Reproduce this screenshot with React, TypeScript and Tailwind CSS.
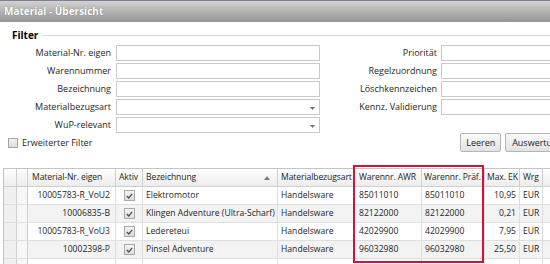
import React from "react";

const font = { fontFamily: '"Open Sans", "Liberation Sans", sans-serif' };

const leftFields = [
  { label: "Material-Nr. eigen", select: false },
  { label: "Warennummer", select: false },
  { label: "Bezeichnung", select: false },
  { label: "Materialbezugsart", select: true },
  { label: "WuP-relevant", select: true },
];

const rightFields = ["Priorität", "Regelzuordnung", "Löschkennzeichen", "Kennz. Validierung"];

const rows = [
  { nr: "10005783-R_VoU2", bez: "Elektromotor", art: "Handelsware", awr: "85011010", praef: "85011010", ek: "10,95", wrg: "EUR" },
  { nr: "10006835-B", bez: "Klingen Adventure (Ultra-Scharf)", art: "Handelsware", awr: "82122000", praef: "82122000", ek: "0,21", wrg: "EUR" },
  { nr: "10005783-R_VoU3", bez: "Ledereteui", art: "Handelsware", awr: "42029900", praef: "42029900", ek: "7,95", wrg: "EUR" },
  { nr: "10002398-P", bez: "Pinsel Adventure", art: "Handelsware", awr: "96032980", praef: "96032980", ek: "25,50", wrg: "EUR" },
];

const cols = "grid grid-cols-[13px_11px_88px_27px_135px_77px_67px_63px_35px_23px_60px]";
const cell = "flex items-center overflow-hidden whitespace-nowrap border-r";

function Caret() {
  return (
    <svg width="5" height="3" viewBox="0 0 5 3" className="absolute right-[4px] top-[7px]">
      <path d="M0 0 H5 L2.5 3 Z" fill="#707070" />
    </svg>
  );
}

function Input({ select }: { select?: boolean }) {
  return (
    <div className="relative h-[16px] border border-[#c9c9c9] bg-white">
      {select && <Caret />}
    </div>
  );
}

function Check() {
  return (
    <div className="flex h-[11px] w-[11px] items-center justify-center border border-[#a9a9a9] bg-gradient-to-b from-[#f4f4f4] to-[#dedede]">
      <svg width="7" height="6" viewBox="0 0 7 6">
        <path d="M0.8 3 L2.8 5 L6.2 0.8" fill="none" stroke="#4a4a4a" strokeWidth="1.2" />
      </svg>
    </div>
  );
}

export default function App() {
  return (
    <div className="relative h-[264px] w-[550px] overflow-hidden bg-white text-[9px] text-[#1e1e1e]" style={font}>
      {/* Titel */}
      <div className="flex h-[22px] items-center border-t border-[#7d7d95] bg-gradient-to-b from-[#d2d2d2] to-[#959595] pl-[4px]">
        <span className="text-[10px] font-bold text-white [text-shadow:0_0_1px_#666]">Material - Übersicht</span>
      </div>

      {/* Filter */}
      <div className="flex items-center gap-[4px] pl-[12px] pt-[6px]">
        <span className="text-[10px] font-bold text-black">Filter</span>
        <div className="h-px flex-1 bg-[#d3d9e3]" />
      </div>

      <div className="flex w-[620px] items-start pt-[2px]">
        <div className="grid w-[320px] grid-cols-[111px_204px] content-start gap-x-[5px] gap-y-[2px]">
          {leftFields.map((f) => (
            <React.Fragment key={f.label}>
              <div className="flex h-[16px] items-center justify-end whitespace-nowrap">{f.label}</div>
              <Input select={f.select} />
            </React.Fragment>
          ))}
        </div>
        <div className="grid grid-cols-[117px_200px] content-start gap-x-[4px] gap-y-[2px]">
          {rightFields.map((f) => (
            <React.Fragment key={f}>
              <div className="flex h-[16px] items-center justify-end whitespace-nowrap">{f}</div>
              <Input />
            </React.Fragment>
          ))}
        </div>
      </div>

      <div className="flex w-[620px] items-center pl-[8px]">
        <div className="h-[10px] w-[10px] border border-[#a4a4a4] bg-gradient-to-b from-[#f2f2f2] to-[#dcdcdc]" />
        <span className="ml-[4px] whitespace-nowrap">Erweiterter Filter</span>
        <div className="ml-[368px] flex gap-[4px]">
          <div className="flex h-[19px] w-[41px] items-center justify-center rounded-[2px] border border-[#b5b5b5] bg-gradient-to-b from-[#fafafa] to-[#e2e2e2]">Leeren</div>
          <div className="flex h-[19px] w-[64px] items-center justify-center whitespace-nowrap rounded-[2px] border border-[#b5b5b5] bg-gradient-to-b from-[#fafafa] to-[#e2e2e2]">Auswertung</div>
        </div>
      </div>

      {/* Tabelle */}
      <div className="ml-[3px] mt-[16px] w-[620px] border-l border-t border-[#c4c4c4] text-[8.6px]">
        <div className={`${cols} h-[18px] border-b border-[#cfcfcf] bg-gradient-to-b from-[#ffffff] to-[#ececec] tracking-[-0.1px]`}>
          <div className="border-r border-[#cfcfcf]" />
          <div className="border-r border-[#cfcfcf]" />
          <div className={`${cell} border-[#cfcfcf] pl-[4px]`}>Material-Nr. eigen</div>
          <div className={`${cell} border-[#cfcfcf] pl-[3px]`}>Aktiv</div>
          <div className={`${cell} justify-between border-[#cfcfcf] pl-[3px] pr-[7px]`}>
            <span>Bezeichnung</span>
            <svg width="6" height="4" viewBox="0 0 6 4">
              <path d="M0 4 L3 0 L6 4 Z" fill="#7b7b7b" />
            </svg>
          </div>
          <div className={`${cell} border-[#cfcfcf] pl-[3px]`}>Materialbezugsart</div>
          <div className={`${cell} border-[#cfcfcf] pl-[4px]`}>Warennr. AWR</div>
          <div className={`${cell} border-[#cfcfcf] pl-[2px]`}>Warennr. Präf.</div>
          <div className={`${cell} border-[#cfcfcf] pl-[2px]`}>Max. EK</div>
          <div className={`${cell} border-[#cfcfcf] pl-[3px]`}>Wrg</div>
          <div />
        </div>
        {rows.map((r, i) => (
          <div key={r.nr} className={`${cols} h-[18px] border-b border-[#dedede] ${i % 2 ? "bg-[#f3f3f3]" : "bg-white"}`}>
            <div className="border-r border-[#cfcfcf] bg-[#f0f0f0]" />
            <div className="border-r border-[#cfcfcf] bg-[#f7f7f7]" />
            <div className={`${cell} justify-end border-[#dedede] pr-[5px]`}>{r.nr}</div>
            <div className={`${cell} justify-center border-[#dedede]`}>
              <Check />
            </div>
            <div className={`${cell} border-[#dedede] pl-[3px]`}>{r.bez}</div>
            <div className={`${cell} border-[#dedede] pl-[3px]`}>{r.art}</div>
            <div className={`${cell} border-[#dedede] pl-[4px]`}>{r.awr}</div>
            <div className={`${cell} border-[#dedede] pl-[3px]`}>{r.praef}</div>
            <div className={`${cell} justify-end border-[#dedede] pr-[3px]`}>{r.ek}</div>
            <div className={`${cell} border-[#dedede] pl-[3px]`}>{r.wrg}</div>
            <div />
          </div>
        ))}
        <div className={`${cols} h-[18px] bg-white`}>
          <div className="border-r border-[#cfcfcf] bg-[#f0f0f0]" />
          <div className="border-r border-[#cfcfcf] bg-[#f7f7f7]" />
          <div className="border-r border-[#dedede]" />
          <div className="border-r border-[#dedede]" />
          <div className="border-r border-[#dedede]" />
          <div className="border-r border-[#dedede]" />
          <div className="border-r border-[#dedede]" />
          <div className="border-r border-[#dedede]" />
          <div className="border-r border-[#dedede]" />
          <div className="border-r border-[#dedede]" />
          <div />
        </div>
      </div>

      {/* Markierung */}
      <div className="pointer-events-none absolute left-[353px] top-[165px] h-[98px] w-[131px] border-[2px] border-[#d0143c]" />
    </div>
  );
}
